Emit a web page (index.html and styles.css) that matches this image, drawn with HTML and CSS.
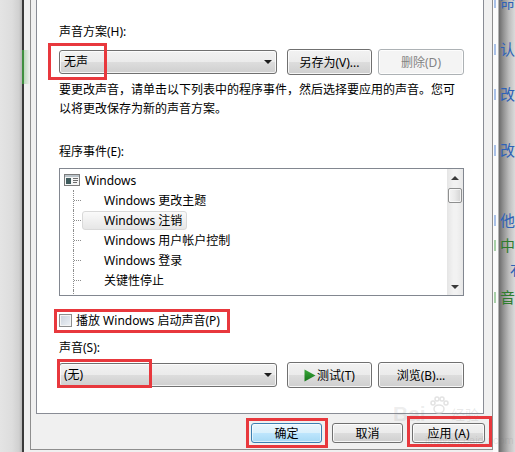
FILE: index.html
```html
<!DOCTYPE html>
<html lang="zh-CN">
<head>
<meta charset="utf-8">
<title>声音</title>
<link rel="stylesheet" href="styles.css">
</head>
<body>
<div class="desk-left"></div>
<div class="window">
  <div class="frame">
    <div class="panel">
      <div class="label lbl-scheme">声音方案(H):</div>
      <div class="row row-scheme">
        <div class="combo"><span class="combo-text">无声</span><span class="tri-down"></span><span class="annot annot-scheme"></span></div>
        <div class="btn btn-a">另存为(V)...</div>
        <div class="btn btn-b btn-disabled">删除(D)</div>
      </div>
      <p class="desc">要更改声音，请单击以下列表中的程序事件，然后选择要应用的声音。您可<br>以将更改保存为新的声音方案。</p>
      <div class="label lbl-events">程序事件(E):</div>
      <div class="listbox">
        <div class="tree">
          <div class="tree-row root">
            <svg class="ico" width="16" height="12" viewBox="0 0 16 12"><rect x="0.5" y="0.5" width="15" height="11" fill="#f4f4f4" stroke="#7b7b7b"/><rect x="1" y="1" width="14" height="2" fill="#b9c2c8"/><rect x="2" y="4" width="5" height="6" fill="#3f5b5c"/><rect x="9" y="4" width="5" height="1" fill="#6d6d6d"/><rect x="9" y="6" width="5" height="1" fill="#6d6d6d"/><rect x="9" y="8" width="4" height="1" fill="#6d6d6d"/></svg>
            <span class="root-text">Windows</span>
          </div>
          <div class="tree-row child"><span class="vline"></span><span class="item">Windows 更改主题</span></div>
          <div class="tree-row child"><span class="vline"></span><span class="item sel">Windows 注销</span></div>
          <div class="tree-row child"><span class="vline"></span><span class="item">Windows 用户帐户控制</span></div>
          <div class="tree-row child"><span class="vline"></span><span class="item">Windows 登录</span></div>
          <div class="tree-row child"><span class="vline"></span><span class="item">关键性停止</span></div>
          <div class="tree-row child"><span class="vline vline-only"></span></div>
        </div>
        <div class="sb">
          <div class="sb-btn"><span class="tri-up"></span></div>
          <div class="sb-track"><div class="sb-thumb"></div></div>
          <div class="sb-btn"><span class="tri-down small"></span></div>
        </div>
      </div>
      <div class="check-row">
        <span class="checkbox"></span><span class="check-text">播放 Windows 启动声音(P)</span>
        <span class="annot annot-check"></span>
      </div>
      <div class="label lbl-sound">声音(S):</div>
      <div class="row row-sound">
        <div class="combo"><span class="combo-text">(无)</span><span class="tri-down"></span><span class="annot annot-sound"></span></div>
        <div class="btn btn-a"><svg class="play" width="12" height="13" viewBox="0 0 12 13"><defs><linearGradient id="pg" x1="0" y1="0" x2="0" y2="1"><stop offset="0" stop-color="#3aa83a"/><stop offset="1" stop-color="#16741a"/></linearGradient></defs><path d="M0.5 0.5 L11.5 6.5 L0.5 12.5 Z" fill="url(#pg)"/></svg>测试(T)</div>
        <div class="btn btn-b">浏览(B)...</div>
      </div>
    </div>
    <div class="footer">
      <div class="btn fbtn btn-default">确定<span class="annot annot-ok"></span></div>
      <div class="btn fbtn">取消</div>
      <div class="btn fbtn fbtn-apply">应用 (A)<span class="annot annot-apply"></span></div>
    </div>
    <div class="watermark">
      <span class="wm-bai">Bai</span>
      <svg class="wm-paw" width="20" height="18" viewBox="0 0 20 18"><ellipse cx="10" cy="13" rx="5" ry="4" fill="none" stroke="#d8d8d8" stroke-width="1.5"/><circle cx="4" cy="7" r="2" fill="none" stroke="#d8d8d8" stroke-width="1.5"/><circle cx="8" cy="3" r="2" fill="none" stroke="#d8d8d8" stroke-width="1.5"/><circle cx="13" cy="3" r="2" fill="none" stroke="#d8d8d8" stroke-width="1.5"/><circle cx="17" cy="7" r="2" fill="none" stroke="#d8d8d8" stroke-width="1.5"/></svg>
      <span class="wm-jy">经验</span>
      <span class="wm-url">jingyan.baidu.com</span>
    </div>
  </div>
</div>
<div class="desk-right">
  <div class="bg-item i1"><span class="mark"></span><span class="bt blue">命板</span></div>
  <div class="bg-item i2"><span class="mark"></span><span class="bt blue">认证</span></div>
  <div class="bg-item i3"><span class="mark"></span><span class="bt blue">改变</span></div>
  <div class="bg-item i4"><span class="mark"></span><span class="bt blue">改申</span></div>
  <div class="bg-item i5"><span class="mark"></span><span class="bt blue">他项</span></div>
  <div class="bg-item i6"><span class="mark green"></span><span class="bt green">中心</span></div>
  <div class="bg-item i7"><span class="bt blue indent">右</span></div>
  <div class="bg-item i8"><span class="mark green"></span><span class="bt green">音量</span></div>
</div>
</body>
</html>
```

FILE: styles.css
```css
* { box-sizing: border-box; margin: 0; padding: 0; }
html, body { width: 515px; height: 452px; overflow: hidden; }
body {
  display: flex;
  font-family: "Noto Sans", "Noto Sans CJK SC", sans-serif;
  font-size: 12px;
  color: #000;
  background: #e0e0e0;
}

.desk-left {
  width: 22px; flex: none;
  background: linear-gradient(to right, #e4e4e4 0, #dddddd 12px, #d0d0d0 19px, #b8b8b8 22px);
}

.window {
  width: 471px; flex: none;
  border-left: 2px solid #3a3a3a;
  background: #f0f0f0;
  padding-left: 6px;
  position: relative;
}
.window::before {
  content: ""; position: absolute; left: -2px; top: 50px; width: 2px; height: 34px;
  background: #3f8f3f;
}
.window::after {
  content: ""; position: absolute; left: 0; top: 50px; width: 6px; height: 34px;
  background: linear-gradient(to right, rgba(90,170,90,0.35), rgba(90,170,90,0));
}

.frame {
  width: 463px; height: 450px;
  border: 1px solid #8e8e8e; border-top: none;
  padding-left: 5px;
  display: flex; flex-direction: column;
  position: relative;
}

.panel {
  width: 448px; height: 414px; flex: none;
  background: #fff;
  border: 1px solid #898c95; border-top: none;
  padding-left: 22px;
}

.label { line-height: 16px; height: 16px; white-space: nowrap; }
.lbl-scheme { margin-top: 24px; }
.lbl-events { margin-top: 26px; }
.lbl-sound { margin-top: 12px; }

.row { display: flex; align-items: center; width: 405px; height: 26px; }
.row-scheme { margin-top: 9px; }
.row-sound { margin-top: 6px; }

.combo {
  position: relative;
  width: 218px; height: 24px; margin-right: 10px;
  border: 1px solid #707070; border-radius: 3px;
  background: linear-gradient(to bottom, #f2f2f2 0%, #ebebeb 50%, #dddddd 50%, #cfcfcf 100%);
  box-shadow: inset 0 0 0 1px rgba(255,255,255,0.75);
  display: flex; align-items: center;
  padding-left: 4px;
}
.combo-text { flex: 1; line-height: 20px; }
.tri-down {
  width: 0; height: 0; margin-right: 4px;
  border-left: 4px solid transparent; border-right: 4px solid transparent;
  border-top: 4px solid #1e1e1e;
}
.tri-down.small { margin-right: 0; border-top-color: #3a3a3a; }
.tri-up {
  width: 0; height: 0;
  border-left: 4px solid transparent; border-right: 4px solid transparent;
  border-bottom: 4px solid #3a3a3a;
}

.btn {
  position: relative;
  height: 26px;
  border: 1px solid #707070; border-radius: 3px;
  background: linear-gradient(to bottom, #f2f2f2 0%, #ebebeb 50%, #dddddd 50%, #cfcfcf 100%);
  box-shadow: inset 0 0 0 1px rgba(255,255,255,0.8);
  display: flex; align-items: center; justify-content: center;
  white-space: nowrap;
}
.btn-a { width: 85px; margin-right: 6px; }
.btn-b { width: 86px; }
.btn-disabled {
  border-color: #adb2b5;
  background: #f4f4f4;
  color: #838383;
}
.play { margin-right: 1px; }

.desc { margin-top: 5px; line-height: 19px; width: 405px; white-space: nowrap; }

.listbox {
  margin-top: 8px;
  width: 405px; height: 128px;
  border: 1px solid #828790;
  display: flex;
  background: #fff;
}
.tree { flex: 1; padding-top: 1px; overflow: hidden; }
.tree-row { height: 20px; display: flex; align-items: center; white-space: nowrap; }
.ico { margin-left: 4px; flex: none; }
.root-text { margin-left: 5px; }
.vline {
  flex: none;
  margin-left: 13px; width: 9px; height: 20px;
  border-left: 1px dotted #8c8c8c;
  background: linear-gradient(to right, #8c8c8c 50%, transparent 50%) left center / 2px 1px repeat-x;
}
.vline-only { background: none; }
.item {
  height: 19px; line-height: 17px;
  padding: 0 4px 0 21px;
  border: 1px solid transparent; border-radius: 3px;
}
.item.sel {
  border-color: #d9d9d9;
  background: linear-gradient(to bottom, #fafafa, #e6e6e6);
}

.sb {
  width: 16px; flex: none;
  display: flex; flex-direction: column;
  background: linear-gradient(to right, #e5e5e5, #f2f2f2 40%, #f2f2f2 60%, #e8e8e8);
}
.sb-btn { height: 17px; display: flex; align-items: center; justify-content: center; }
.sb-track { flex: 1; padding-top: 2px; }
.sb-thumb {
  margin-left: 1px;
  width: 14px; height: 15px;
  border: 1px solid #8e8f8f; border-radius: 2px;
  background: linear-gradient(to right, #f4f4f4, #e9e9e9 50%, #d2d2d2);
  box-shadow: inset 0 0 0 1px rgba(255,255,255,0.7);
}

.check-row {
  position: relative;
  margin-top: 16px; height: 16px;
  display: flex; align-items: center;
}
.checkbox {
  width: 13px; height: 13px; flex: none;
  border: 1px solid #8e8f8f;
  background: linear-gradient(135deg, #c9d2dc, #eef2f6);
  box-shadow: inset 0 0 0 1px #f4f4f4;
}
.check-text { margin-left: 4px; white-space: nowrap; }

.footer {
  display: flex; justify-content: flex-end;
  padding: 9px 7px 0 0;
}
.fbtn { width: 71px; height: 20px; margin-left: 10px; }
.fbtn-apply { width: 73px; margin-left: 9px; }
.btn-default {
  border-color: #3c7fb1;
  background: linear-gradient(to bottom, #eaf6fd 0%, #d9f0fc 50%, #bee6fd 50%, #a7d9f5 100%);
  box-shadow: inset 0 0 0 1px rgba(255,255,255,0.6);
}

.annot {
  position: absolute;
  border: 3px solid #e8383d;
  pointer-events: none;
  z-index: 3;
}
.annot-scheme { left: -12px; top: -8px; width: 59px; height: 37px; }
.annot-check { left: -5px; top: -3px; width: 176px; height: 24px; }
.annot-sound { left: -3px; top: -5px; width: 95px; height: 29px; }
.annot-ok { left: -6px; top: -6px; width: 82px; height: 30px; }
.annot-apply { left: -6px; top: -8px; width: 85px; height: 31px; }

.watermark { position: absolute; left: 362px; top: 396px; width: 100px; height: 52px; pointer-events: none; z-index: 2; }
.wm-bai { position: absolute; left: 0; top: 6px; font-size: 21px; font-weight: bold; color: rgba(120,120,120,0.14); font-family: "Liberation Sans", sans-serif; }
.wm-paw { position: absolute; left: 36px; top: 0; opacity: 0.7; }
.wm-jy { position: absolute; left: 58px; top: 8px; font-size: 14px; color: rgba(120,120,120,0.16); }
.wm-url { position: absolute; left: 32px; top: 38px; font-size: 11px; color: rgba(120,120,120,0.16); font-family: "Liberation Sans", sans-serif; }

.desk-right {
  width: 22px; flex: none;
  overflow: hidden;
  background: linear-gradient(to right, #fbfbfb 0, #fbfbfb 5px, #6c6c6c 6px, #8f8f8f 10px, #bdbdbd 16px, #dadada 22px);
  font-family: "Noto Sans CJK SC", sans-serif;
  font-size: 15px;
}
.bg-item { display: flex; align-items: center; height: 20px; white-space: nowrap; }
.mark { width: 2px; height: 11px; margin-left: 1px; margin-right: 4px; background: #a9c1e8; flex: none; }
.mark.green { background: #a8d0a8; }
.bt { line-height: 20px; }
.bt.blue { color: #2f62b6; }
.bt.green { color: #2f7d2f; }
.bt.indent { margin-left: 17px; }
.i1 { margin-top: -8px; }
.i2 { margin-top: 27px; }
.i3 { margin-top: 25px; }
.i4 { margin-top: 36px; }
.i5 { margin-top: 50px; }
.i6 { margin-top: 5px; }
.i7 { margin-top: 4px; }
.i8 { margin-top: 8px; }
```
